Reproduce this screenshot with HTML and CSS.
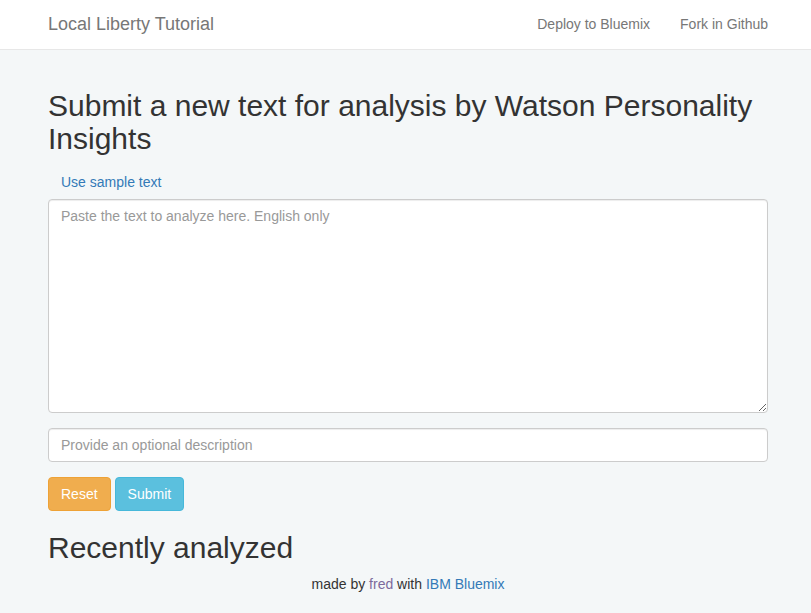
FILE: index.html
```html
<!DOCTYPE html>
<html>
<head>
<meta charset="utf-8">
<title>Local Liberty Tutorial</title>
<link rel="stylesheet" href="styles.css">
</head>
<body>
<nav class="navbar">
  <div class="container nav-inner">
    <a class="brand" href="#">Local Liberty Tutorial</a>
    <ul class="nav-links">
      <li><a href="#">Deploy to Bluemix</a></li>
      <li><a href="#">Fork in Github</a></li>
    </ul>
  </div>
</nav>
<main class="container page">
  <h2 class="title">Submit a new text for analysis by Watson Personality Insights</h2>
  <form class="form">
    <div class="sample-row"><button type="button" class="btn btn-link">Use sample text</button></div>
    <div class="form-group">
      <textarea class="form-control textarea" rows="10" placeholder="Paste the text to analyze here. English only"></textarea>
    </div>
    <div class="form-group">
      <input class="form-control" type="text" placeholder="Provide an optional description">
    </div>
    <div class="actions">
      <button type="reset" class="btn btn-warning">Reset</button>
      <button type="button" class="btn btn-info">Submit</button>
    </div>
  </form>
  <h2 class="title">Recently analyzed</h2>
  <footer class="footer">made by <a class="visited" href="#">fred</a> with <a href="#">IBM Bluemix</a></footer>
</main>
</body>
</html>
```

FILE: styles.css
```css
* { box-sizing: border-box; }
html, body { margin: 0; padding: 0; }
body {
  background: #f4f7f8;
  font-family: "Liberation Sans", Arial, Helvetica, sans-serif;
  font-size: 14px;
  line-height: 20px;
  color: #333;
}
a { color: #337ab7; text-decoration: none; }
a.visited { color: #7d6a9c; }
.container {
  width: 720px;
  margin-left: 48px;
}
.page { display: flow-root; }
.navbar {
  background: #fff;
  border-bottom: 1px solid #e7e7e7;
  height: 50px;
  margin-bottom: 19px;
}
.nav-inner {
  display: flex;
  justify-content: space-between;
  align-items: stretch;
  height: 49px;
}
.brand {
  font-size: 18px;
  line-height: 20px;
  color: #777;
  padding: 14px 0 15px;
}
.nav-links {
  list-style: none;
  margin: 0 -15px 0 0;
  padding: 0;
  display: flex;
}
.nav-links a {
  display: block;
  padding: 14px 15px 15px;
  color: #777;
  line-height: 20px;
}
.title {
  font-size: 30px;
  font-weight: 500;
  line-height: 33px;
  margin: 20px 0 10px;
  color: #333;
}
.form { margin: 0; }
.sample-row { margin: 0; }
.btn {
  display: inline-block;
  font-family: inherit;
  font-size: 14px;
  line-height: 20px;
  padding: 6px 12px;
  border: 1px solid transparent;
  border-radius: 4px;
  cursor: pointer;
  vertical-align: middle;
}
.btn-link {
  background: transparent;
  color: #337ab7;
}
.btn-warning {
  background: #f0ad4e;
  border-color: #eea236;
  color: #fff;
}
.btn-info {
  background: #5bc0de;
  border-color: #46b8da;
  color: #fff;
}
.actions {
  display: flex;
  gap: 4px;
}
.form-group { margin-bottom: 15px; }
.form-control {
  display: block;
  width: 100%;
  height: 34px;
  padding: 6px 12px;
  font-family: inherit;
  font-size: 14px;
  line-height: 20px;
  color: #555;
  background: #fff;
  border: 1px solid #ccc;
  border-radius: 4px;
  box-shadow: inset 0 1px 1px rgba(0,0,0,.075);
  margin: 0;
}
.form-control::placeholder { color: #999; }
.textarea {
  height: 214px;
  resize: vertical;
}
.footer {
  text-align: center;
  line-height: 20px;
}
```
